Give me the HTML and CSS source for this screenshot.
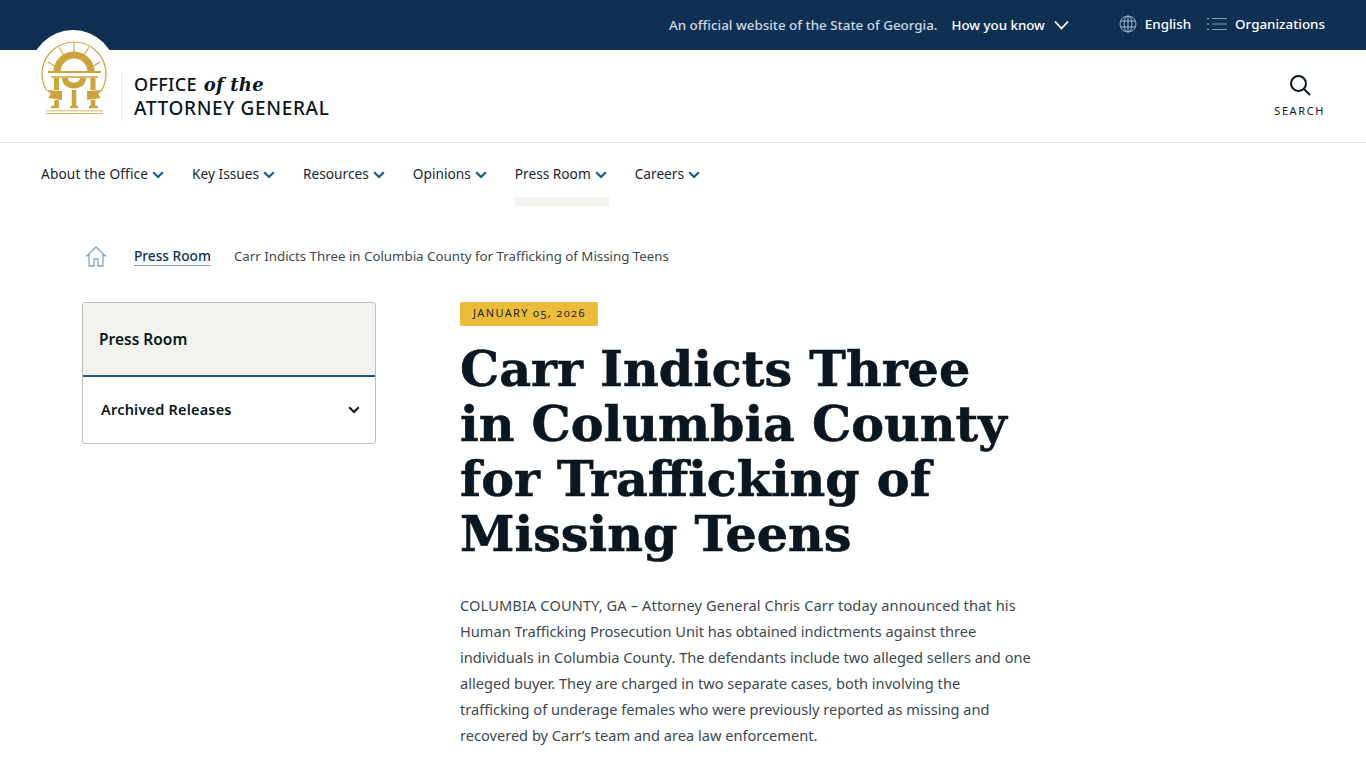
FILE: index.html
```html
<!DOCTYPE html>
<html lang="en">
<head>
    <meta charset="UTF-8">
    <meta name="viewport" content="width=device-width, initial-scale=1.0">
    <title>Carr Indicts Three in Columbia County for Trafficking of Missing Teens</title>
    <link rel="stylesheet" href="styles.css">
</head>
<body>
    <!-- Top bar -->
    <div class="topbar">
        <span class="official">An official website of the State of Georgia.</span>
        <span class="how">How you know</span>
        <svg class="how-chevron" width="15" height="10" viewBox="0 0 15 10"><path d="M1 1.500l6.500 7 6.500-7" fill="none" stroke="#fff" stroke-width="1.800"/></svg>
        <svg class="globe" width="18" height="18" viewBox="0 0 18 18" fill="none" stroke="#9fb2c4" stroke-width="1"><circle cx="9" cy="9" r="8"/><ellipse cx="9" cy="9" rx="4" ry="8"/><path d="M9 1v16M1.600 6h14.800M1.600 12h14.800"/></svg>
        <span class="top-link">English</span>
        <svg class="orgs" width="20" height="14" viewBox="0 0 20 14" fill="none" stroke="#8fa3b6" stroke-width="1"><path d="M0 1.500h2M5 1.500h15M0 7h2M5 7h15M0 12.500h2M5 12.500h15"/></svg>
        <span class="top-link">Organizations</span>
    </div>

    <!-- Logo row -->
    <header class="masthead">
        <div class="seal-tab">
            <svg width="66" height="76" viewBox="0 0 66 76" fill="none" stroke="#cda33c">
                <path d="M5.300 50A32 32 0 1 1 60.700 50" stroke-width="1.200"/>
                <path d="M33 2v11M18 7l5 8M48 7l-5 8M7 22l8 5M59 22l-8 5" stroke-width="1.100"/>
                <path d="M16 32A17 17 0 0 1 50 32" stroke-width="7"/>
                <path d="M7 32h53" stroke-width="2"/>
                <path d="M10 37h47" stroke-width="1.500"/>
                <path d="M21 38C21 52 45 52 45 38h-6C39 44 27 44 27 38z" fill="#cda33c" stroke="none"/>
                <path d="M15.500 38v12M52 38v12" stroke-width="5"/>
                <path d="M33 50v16" stroke-width="4.500"/>
                <path d="M5 50l16 1v9L7 58l3-4zM62 50l-16 1v9l14-2-3-4z" fill="#cda33c" stroke="none"/>
                <path d="M15.500 60v6M52 60v6" stroke-width="4.500"/>
                <path d="M10 67h8M29 67h8M48 67h9" stroke-width="2.500"/>
                <path d="M5 70.800h57M5 73.500h57" stroke-width="0.800"/>
            </svg>
        </div>
        <div class="site-name">
            <div class="name-top">OFFICE <em>of the</em></div>
            <div class="name-bottom">ATTORNEY GENERAL</div>
        </div>
        <div class="search">
            <svg width="22" height="22" viewBox="0 0 22 22" fill="none" stroke="#0a1720" stroke-width="2"><circle cx="9.500" cy="9.500" r="7.500"/><path d="M15 15l6 6"/></svg>
            <span>SEARCH</span>
        </div>
    </header>

    <!-- Main nav -->
    <nav class="mainnav">
        <a class="nav-item">About the Office<svg class="chev" width="12" height="8" viewBox="0 0 12 8"><path d="M1.200 1.200L6 6l4.800-4.800" fill="none" stroke="#1b5a87" stroke-width="2.200"/></svg></a>
        <a class="nav-item">Key Issues<svg class="chev" width="12" height="8" viewBox="0 0 12 8"><path d="M1.200 1.200L6 6l4.800-4.800" fill="none" stroke="#1b5a87" stroke-width="2.200"/></svg></a>
        <a class="nav-item">Resources<svg class="chev" width="12" height="8" viewBox="0 0 12 8"><path d="M1.200 1.200L6 6l4.800-4.800" fill="none" stroke="#1b5a87" stroke-width="2.200"/></svg></a>
        <a class="nav-item">Opinions<svg class="chev" width="12" height="8" viewBox="0 0 12 8"><path d="M1.200 1.200L6 6l4.800-4.800" fill="none" stroke="#1b5a87" stroke-width="2.200"/></svg></a>
        <a class="nav-item active">Press Room<svg class="chev" width="12" height="8" viewBox="0 0 12 8"><path d="M1.200 1.200L6 6l4.800-4.800" fill="none" stroke="#1b5a87" stroke-width="2.200"/></svg></a>
        <a class="nav-item">Careers<svg class="chev" width="12" height="8" viewBox="0 0 12 8"><path d="M1.200 1.200L6 6l4.800-4.800" fill="none" stroke="#1b5a87" stroke-width="2.200"/></svg></a>
    </nav>

    <!-- Breadcrumb -->
    <div class="crumbs">
        <svg width="22" height="21" viewBox="0 0 22 21" fill="none" stroke="#7ba7cb" stroke-width="1.300"><path d="M1 10.500L11 1l10 9.500M4 8v12h5v-7h4v7h5V8"/></svg>
        <a class="crumb-link">Press Room</a>
        <span class="crumb-current">Carr Indicts Three in Columbia County for Trafficking of Missing Teens</span>
    </div>

    <div class="layout">
        <aside class="sidebar">
            <div class="side-title">Press Room</div>
            <div class="side-row">
                <span class="side-label">Archived Releases</span>
                <svg width="12" height="8" viewBox="0 0 12 8"><path d="M1.200 1.200L6 6l4.800-4.800" fill="none" stroke="#0a1720" stroke-width="2"/></svg>
            </div>
        </aside>
        <main class="article">
            <div class="date">JANUARY 05, 2026</div>
            <h1>Carr Indicts Three in Columbia County for Trafficking of Missing Teens</h1>
            <p>COLUMBIA COUNTY, GA – Attorney General Chris Carr today announced that his Human Trafficking Prosecution Unit has obtained indictments against three individuals in Columbia County. The defendants include two alleged sellers and one alleged buyer. They are charged in two separate cases, both involving the trafficking of underage females who were previously reported as missing and recovered by Carr’s team and area law enforcement.</p>
        </main>
    </div>
</body>
</html>
```

FILE: styles.css
```css
html, body {
    margin: 0;
    height: 768px;
    overflow: hidden;
}

body {
    background-color: #fff;
    color: #0a1720;
    font-family: "Noto Sans", sans-serif;
}

/* Top bar */
.topbar {
    height: 50px;
    background-color: #103053;
    color: #fff;
    display: flex;
    align-items: center;
    justify-content: flex-end;
    padding-right: 41px;
    font-size: 13.400px;
    font-weight: 500;
}

.official {
    color: #cfd8e0;
    margin-right: 14px;
}

.how {
    font-size: 13.300px;
}

.how-chevron {
    margin-left: 9px;
    margin-right: 50px;
}

.top-link {
    margin-left: 8px;
    position: relative;
    top: -1px;
}

.globe {
    position: relative;
    top: -1px;
}

.orgs {
    margin-left: 16px;
    position: relative;
    top: -1px;
}

/* Logo row */
.masthead {
    height: 92px;
    border-bottom: 1px solid #e6e6e6;
    display: flex;
    align-items: center;
    padding: 0 41px 0 30px;
    position: relative;
}

.seal-tab {
    position: absolute;
    left: 30px;
    top: -20px;
    width: 86px;
    height: 86px;
    border-radius: 50%;
    background-color: #fff;
    display: flex;
    justify-content: center;
    padding: 10px 0 0 2px;
    box-sizing: border-box;
}

.site-name {
    margin-left: 91px;
    padding-left: 12px;
    border-left: 1px solid #ececec;
    font-weight: 500;
    line-height: 24px;
}

.name-top {
    font-size: 18px;
    letter-spacing: 0.3px;
}

.name-bottom {
    font-size: 19px;
    letter-spacing: 0.65px;
    line-height: 23px;
    padding-bottom: 1px;
}

.site-name em {
    font-family: "DejaVu Serif", serif;
    font-weight: 700;
    letter-spacing: 0.2px;
    margin-left: 2px;
}

.search {
    margin-left: auto;
    display: flex;
    flex-direction: column;
    align-items: center;
    gap: 7px;
    font-size: 11px;
    letter-spacing: 1.6px;
}

/* Main nav */
.mainnav {
    display: flex;
    gap: 28px;
    padding-left: 41px;
    height: 63px;
}

.nav-item {
    height: 63px;
    padding-top: 21px;
    box-sizing: border-box;
    font-size: 13.700px;
    line-height: 19px;
    color: #1a2630;
    position: relative;
}

.nav-item:first-child {
    letter-spacing: 0.13px;
}

.nav-item.active {
    border-bottom: 9px solid #f3f2ee;
    padding-right: 2px;
    margin-right: -2px;
}

.chev {
    margin-left: 4px;
}

/* Breadcrumb */
.crumbs {
    display: flex;
    align-items: center;
    height: 40px;
    margin-top: 30px;
    padding-left: 85px;
    font-size: 13.300px;
}

.crumb-link {
    margin-left: 27px;
    font-size: 13.700px;
    color: #103053;
    font-weight: 500;
    border-bottom: 1px solid #7ba7cb;
}

.crumb-current {
    margin-left: 23px;
    color: #3d4850;
}

/* Page columns */
.layout {
    display: flex;
    padding: 26px 0 0 82px;
}

.sidebar {
    width: 294px;
    height: 142px;
    box-sizing: border-box;
    border: 1px solid #bdbdbd;
    border-radius: 3px;
    overflow: hidden;
    flex-shrink: 0;
}

.side-title {
    height: 72px;
    background-color: #f3f2ee;
    border-bottom: 2px solid #1b5a87;
    padding-left: 16px;
    display: flex;
    align-items: center;
    font-size: 15.500px;
    font-weight: 600;
}

.side-row {
    display: flex;
    align-items: center;
    justify-content: space-between;
    height: 66px;
    padding: 0 15px 0 18px;
    font-size: 14.500px;
    letter-spacing: 0.2px;
    font-weight: 600;
}

.side-label {
    padding-bottom: 2px;
}

.article {
    width: 572px;
    margin-left: 84px;
}

.date {
    width: fit-content;
    background-color: #ecbb3a;
    border-radius: 2px;
    height: 24px;
    line-height: 22px;
    padding: 0 12px 0 13px;
    font-size: 11px;
    letter-spacing: 1.35px;
    font-variant-numeric: oldstyle-nums;
    color: #1a2630;
}

h1 {
    margin: 16px 0 0;
    font-family: "DejaVu Serif", serif;
    font-size: 49.200px;
    font-weight: 700;
    line-height: 55px;
    color: #0a1720;
    -webkit-text-stroke: 0.6px #0a1720;
}

p {
    margin: 30px 0 0;
    font-size: 14.600px;
    line-height: 26px;
    color: #3d4850;
}

p::first-line {
    letter-spacing: 0.12px;
}
```
